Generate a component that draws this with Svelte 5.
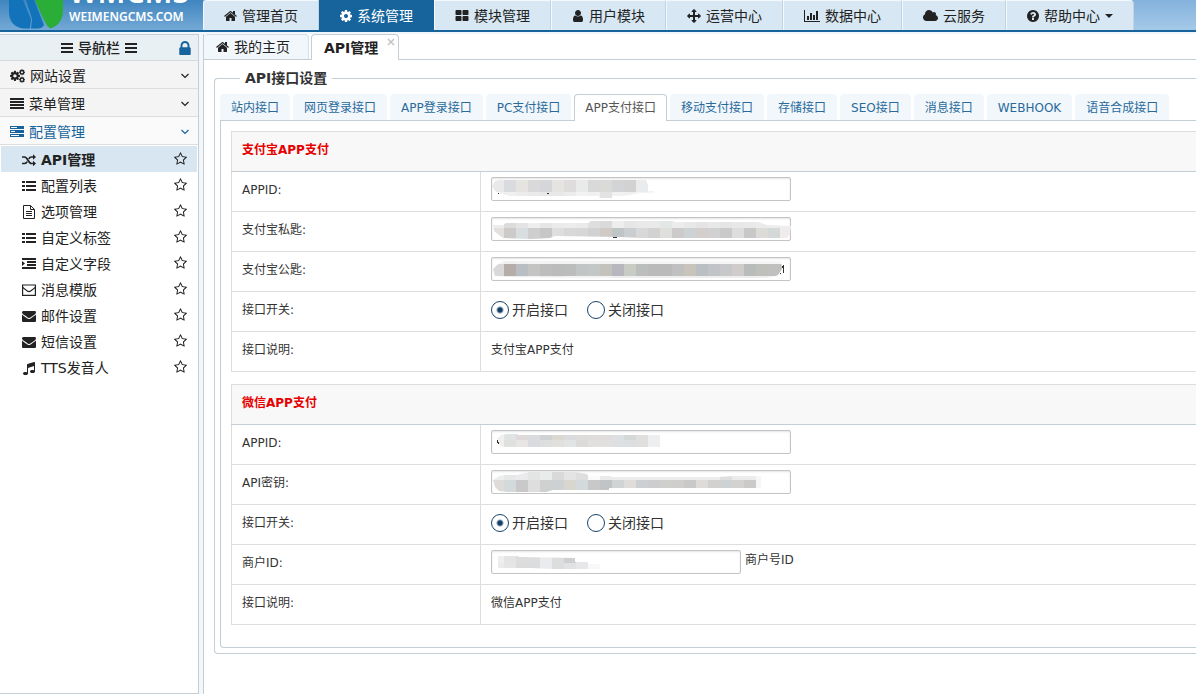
<script lang="ts">
	type Part = { d: string; line?: number; t?: string };
	type Icon = { w: number; box: string; parts: Part[] };

	const cog =
		'M1152 896q0-106-75-181t-181-75-181 75-75 181 75 181 181 75 181-75 75-181zm512-109v222q0 12-8 23t-20 13l-185 28q-19 54-39 91 35 50 107 138 10 12 10 25t-9 23q-27 37-99 108t-94 71q-12 0-26-9l-138-108q-44 23-91 38-16 136-29 186-7 28-36 28h-222q-14 0-24.5-8.5t-11.5-21.5l-28-184q-49-16-90-37l-141 107q-10 9-25 9-14 0-25-11-126-114-165-168-7-10-7-23 0-12 8-23 15-21 51-66.5t54-70.5q-27-50-41-99l-183-27q-13-2-21-12.5t-8-23.5v-222q0-12 8-23t19-13l186-28q14-46 39-92-40-57-107-138-10-12-10-24 0-10 9-23 26-36 98.5-107.5t94.5-71.5q13 0 26 10l138 107q44-23 91-38 16-136 29-186 7-28 36-28h222q14 0 24.5 8.5t11.5 21.5l28 184q49 16 90 37l142-107q9-9 24-9 13 0 25 10 129 119 165 170 7 8 7 22 0 12-8 23-15 21-51 66.5t-54 70.5q26 50 41 98l183 28q13 2 21 12.5t8 23.5z';

	const icons: Record<string, Icon> = {
		home: {
			w: 13,
			box: '64 0 1664 1792',
			parts: [
				{
					d: 'M1472 992v480q0 26-19 45t-45 19h-384v-384h-256v384h-384q-26 0-45-19t-19-45v-480q0-1 .5-3t.5-3l575-474 575 474q1 2 1 6zm223-69l-62 74q-8 9-21 11h-3q-13 0-21-7l-692-577-692 577q-12 8-24 7-13-2-21-11l-62-74q-8-10-7-23.5t11-21.5l719-599q32-26 76-26t76 26l244 204v-195q0-14 9-23t23-9h192q14 0 23 9t9 23v408l219 182q10 8 11 21.5t-7 23.5z'
				}
			]
		},
		cog: { w: 12, box: '128 0 1536 1792', parts: [{ d: cog }] },
		cogs: {
			w: 15,
			box: '0 0 15 14',
			parts: [
				{ d: cog, t: 'translate(-1 1) scale(.0066)' },
				{ d: cog, t: 'translate(8.500 -.3) scale(.0039)' },
				{ d: cog, t: 'translate(8.500 7.2) scale(.0039)' }
			]
		},
		blocks: {
			w: 14,
			box: '0 0 1792 1792',
			parts: [
				{
					d: 'M832 1024v384q0 52-38 90t-90 38h-512q-52 0-90-38t-38-90v-384q0-52 38-90t90-38h512q52 0 90 38t38 90zm0-768v384q0 52-38 90t-90 38h-512q-52 0-90-38t-38-90v-384q0-52 38-90t90-38h512q52 0 90 38t38 90zm896 768v384q0 52-38 90t-90 38h-512q-52 0-90-38t-38-90v-384q0-52 38-90t90-38h512q52 0 90 38t38 90zm0-768v384q0 52-38 90t-90 38h-512q-52 0-90-38t-38-90v-384q0-52 38-90t90-38h512q52 0 90 38t38 90z'
				}
			]
		},
		user: {
			w: 12,
			box: '128 0 1536 1792',
			parts: [
				{
					d: 'M1536 1399q0 109-62.5 187t-150.5 78h-854q-88 0-150.5-78t-62.5-187q0-85 8.5-160.5t31.5-152 58.5-131 94-89 134.5-34.5q131 128 313 128t313-128q76 0 134.5 34.5t94 89 58.5 131 31.5 152 8.5 160.5zm-256-887q0 159-112.5 271.5t-271.5 112.5-271.5-112.5-112.5-271.5 112.5-271.5 271.5-112.5 271.5 112.5 112.5 271.5z'
				}
			]
		},
		arrows: {
			w: 14,
			box: '0 0 1792 1792',
			parts: [
				{
					d: 'M1792 896q0 26-19 45l-256 256q-19 19-45 19t-45-19-19-45v-128h-384v384h128q26 0 45 19t19 45-19 45l-256 256q-19 19-45 19t-45-19l-256-256q-19-19-19-45t19-45 45-19h128v-384h-384v128q0 26-19 45t-45 19-45-19l-256-256q-19-19-19-45t19-45l256-256q19-19 45-19t45 19 19 45v128h384v-384h-128q-26 0-45-19t-19-45 19-45l256-256q19-19 45-19t45 19l256 256q19 19 19 45t-19 45-45 19h-128v384h384v-128q0-26 19-45t45-19 45 19l256 256q19 19 19 45z'
				}
			]
		},
		chart: {
			w: 16,
			box: '0 0 16 14',
			parts: [{ d: 'M0 1h1v11h15v1H0zM3 7h2v4H3zM6 4h2v7H6zM9 6h2v5H9zM12 2h2v9h-2z' }]
		},
		cloud: {
			w: 15,
			box: '64 0 1920 1792',
			parts: [
				{
					d: 'M1984 1152q0 159-112.5 271.5t-271.5 112.5h-1088q-185 0-316.5-131.5t-131.5-316.5q0-132 71-241.5t187-163.5q-2-28-2-43 0-212 150-362t362-150q158 0 286.5 88t187.5 230q70-62 166-62 106 0 181 75t75 181q0 75-41 138 129 30 213 134.5t84 239.5z'
				}
			]
		},
		help: {
			w: 12,
			box: '128 0 1536 1792',
			parts: [
				{
					d: 'M1024 1376v-192q0-14-9-23t-23-9h-192q-14 0-23 9t-9 23v192q0 14 9 23t23 9h192q14 0 23-9t9-23zm256-672q0-88-55.5-163t-138.5-116-170-41q-243 0-371 213-15 24 8 42l132 100q7 6 19 6 16 0 25-12 53-68 86-92 34-24 86-24 48 0 85.5 26t37.5 59q0 38-20 61t-68 45q-63 28-115.5 86.5t-52.5 125.5v36q0 14 9 23t23 9h192q14 0 23-9t9-23q0-19 21.5-49.5t54.5-49.5q32-18 49-28.5t46-35 44.5-48 28-60.5 12.5-81zm384 192q0 209-103 385.5t-279.5 279.5-385.5 103-385.5-103-279.5-279.5-103-385.5 103-385.5 279.5-279.5 385.5-103 385.5 103 279.5 279.5 103 385.5z'
				}
			]
		},
		caret: { w: 8, box: '0 0 8 14', parts: [{ d: 'M0 5h8L4 9z' }] },
		bars: { w: 12, box: '0 0 12 14', parts: [{ d: 'M0 2h12v2H0zM0 6h12v2H0zM0 10h12v2H0z' }] },
		lines: {
			w: 14,
			box: '0 0 14 14',
			parts: [{ d: 'M0 1h14v2H0zM0 4h14v2H0zM0 7h14v2H0zM0 10h14v2H0z' }]
		},
		server: {
			w: 14,
			box: '0 0 14 14',
			parts: [
				{ d: 'M0 1h14v3H0zm1 1v1h6V2zM0 5h14v3H0zm1 1v1h4V6zM0 9h14v3H0zm1 1v1h8v-1z' }
			]
		},
		lock: {
			w: 14,
			box: '256 128 1280 1408',
			parts: [
				{
					d: 'M640 768h512v-192q0-106-75-181t-181-75-181 75-75 181v192zm832 96v576q0 40-28 68t-68 28h-960q-40 0-68-28t-28-68v-576q0-40 28-68t68-28h32v-192q0-184 132-316t316-132 316 132 132 316v192h32q40 0 68 28t28 68z'
				}
			]
		},
		down: { w: 8, box: '0 0 8 14', parts: [{ d: 'M.5 5 4 8.5 7.5 5', line: 1.2 }] },
		random: {
			w: 14,
			box: '0 0 14 14',
			parts: [
				{ d: 'M0 4h2.5c3.5 0 3.500 6.500 7 6.500H12M0 10.500h2.500q1.700 0 2.700-1.900M6.800 5.900Q7.800 4 9.500 4H12', line: 1.7 },
				{ d: 'M11 1.200 14 4l-3 2.800zM11 7.700l3 2.800-3 2.800z' }
			]
		},
		list: {
			w: 14,
			box: '0 0 14 14',
			parts: [{ d: 'M0 2h3v2H0zM4 2h10v2H4zM0 6h3v2H0zM4 6h10v2H4zM0 10h3v2H0zM4 10h10v2H4z' }]
		},
		file: {
			w: 14,
			box: '0 0 14 14',
			parts: [
				{ d: 'M1.5.5H8.500L12.500 4.500V13.500H1.500zM8.500.5V4.500H12.500M4 6.500h6M4 8.500h6M4 10.500h6', line: 1 }
			]
		},
		indent: {
			w: 14,
			box: '0 0 14 14',
			parts: [{ d: 'M0 1h14v2H0zM5 4h9v2H5zM5 7h9v2H5zM0 10h14v2H0zM0 4l3 2.500L0 9z' }]
		},
		mailOpen: {
			w: 14,
			box: '0 0 14 14',
			parts: [{ d: 'M.6 2h12.800v10.400H.6zM.6 4q1 1.500 4.400 3.800 2 1.500 4 0Q12.400 5.500 13.400 4', line: 1.2 }]
		},
		mail: {
			w: 14,
			box: '0 0 1792 1792',
			parts: [
				{
					d: 'M1792 710v794q0 66-47 113t-113 47h-1472q-66 0-113-47t-47-113v-794q44 49 101 87 362 246 497 345 57 42 92.5 65.5t94.5 48 110 24.5h2q51 0 110-24.5t94.5-48 92.5-65.5q170-123 498-345 57-39 100-87zm0-294q0 79-49 151t-122 123q-376 261-468 325-10 7-42.5 31t-54 38.5-52 32.5-57.5 27-50 9h-2q-23 0-50-9t-57.5-27-52-32.5-54-38.5-42.5-31q-91-64-262-182.5t-205-142.5q-62-42-117-115.5t-55-136.5q0-78 41.5-130t118.5-52h1472q65 0 112.5 47t47.5 113z'
				}
			]
		},
		music: {
			w: 14,
			box: '0 0 1792 1792',
			parts: [
				{
					d: 'M1664 224v1120q0 50-34 89t-86 60.5-103.5 32-96.5 10.5-96.5-10.5-103.5-32-86-60.5-34-89 34-89 86-60.5 103.5-32 96.5-10.5q105 0 192 39v-537l-768 237v709q0 50-34 89t-86 60.5-103.5 32-96.5 10.5-96.5-10.5-103.5-32-86-60.5-34-89 34-89 86-60.5 103.5-32 96.5-10.5q105 0 192 39v-967q0-31 19-56.5t49-35.5l832-256q12-4 28-4 40 0 68 28t28 68z'
				}
			]
		},
		star: {
			w: 13,
			box: '64 64 1664 1664',
			parts: [
				{
					d: 'M1201 1004l306-297-422-62-189-382-189 382-422 62 306 297-73 421 378-199 377 199zm527-357q0 22-26 48l-363 354 86 500q1 7 1 20 0 50-41 50-19 0-40-12l-449-236-449 236q-22 12-40 12-21 0-31.5-14.5t-10.5-35.5q0-6 2-20l86-500-364-354q-25-27-25-48 0-37 56-46l502-73 225-455q19-41 49-41t49 41l225 455 502 73q56 9 56 46z'
				}
			]
		}
	};

	const topNav = [
		{ icon: 'home', label: '管理首页' },
		{ icon: 'cog', label: '系统管理' },
		{ icon: 'blocks', label: '模块管理' },
		{ icon: 'user', label: '用户模块' },
		{ icon: 'arrows', label: '运营中心' },
		{ icon: 'chart', label: '数据中心' },
		{ icon: 'cloud', label: '云服务' },
		{ icon: 'help', label: '帮助中心', more: true }
	];

	const groups = [
		{ icon: 'cogs', label: '网站设置' },
		{ icon: 'lines', label: '菜单管理' },
		{ icon: 'server', label: '配置管理' }
	];

	const menu = [
		{ icon: 'random', label: 'API管理' },
		{ icon: 'list', label: '配置列表' },
		{ icon: 'file', label: '选项管理' },
		{ icon: 'list', label: '自定义标签' },
		{ icon: 'indent', label: '自定义字段' },
		{ icon: 'mailOpen', label: '消息模版' },
		{ icon: 'mail', label: '邮件设置' },
		{ icon: 'mail', label: '短信设置' },
		{ icon: 'music', label: 'TTS发音人' }
	];

	const tabs = [
		'站内接口',
		'网页登录接口',
		'APP登录接口',
		'PC支付接口',
		'APP支付接口',
		'移动支付接口',
		'存储接口',
		'SEO接口',
		'消息接口',
		'WEBHOOK',
		'语音合成接口'
	];

	// masked values: strips of 12px cells cut to an uneven outline
	type Strip = { y: number; h: number; cells: string };
	type Mask = { clip: string; strips: Strip[]; marks?: string };

	const masks: Record<string, Mask> = {
		aliId: {
			clip: '1,9 4,4 8,3 155,3 157,8 157,14 163,14 163,16 150,16 132,19 122,19 121,21 108,21 108,19 19,19 10,17 4,14',
			strips: [
				{ y: 3, h: 12, cells: 'e9e9e9 d9dbde e5e4e0 dad9d9 d4d6da e5e4e0 dfdcdd e9ebeb d9d9d9 dadad9 d3d4d6 d2d2d3 e9ebed f4f4f4' },
				{ y: 15, h: 6, cells: 'f2f2f2 f0f0f0 ececec eceae8 e8e8ea e8e8e8 ececec f2f2f2 f0f0f0 e3e3e3 f0f2f2 f0f0f0 f4f4f4 f6f6f6' }
			],
			marks: 'M7 16h1v1H7zM56 16h2v1h-2z'
		},
		aliPrivate: {
			clip: '2,8 12,8 15,6 72,6 98,6 99,4 183,4 184,5 268,5 276,8 300,9 299,17 296,21 150,21 128,20 64,19 59,21 40,22 12,21 8,18 3,14',
			strips: [
				{ y: 4, h: 7, cells: 'ececec dcdcdc e4e4e4 eeeeee e6e6e6 ebebeb ececec eaeaea dedede dadada eeeeee e6e6e6 e9e9e9 eaeaea e3e8e7 ececec e8e8e8 e4e4e4 e8e8e8 e5e5e5 e8e8e8 e9e9e9 ebebeb ececec f0efef' },
				{ y: 11, h: 11, cells: 'e2e1df cdcaca d8dddf cecece c8c7c7 dedede d8d9d6 d7d7d8 d2d1d2 d0cac7 bfc4c6 cbced0 d8d8d8 d3d2d1 dfdfde cccaca cdd2d4 d4cfcc d1d1d2 c9c9c9 dddddc c9c8c8 dcdbd8 d5d8d9 efeceb' }
			],
			marks: 'M122 20h4v1h-4z'
		},
		aliPublic: {
			clip: '2,12 6,8 12,4 290,4 291,12 287,18 280,21 90,21 12,20 4,19',
			strips: [
				{ y: 4, h: 3, cells: 'f4f4f4 f0f0f0 f2f2f2 f4f4f4 f3f3f3 f3f3f3 f3f3f3 f4f4f4 f3f3f3 f3f3f3 f3f3f3 f6f6f6 f6f6f6 f6f6f6 f6f6f6 f6f6f6 f6f6f6 f6f6f6 f6f6f6 f6f6f6 f6f6f6 f6f6f6 f6f6f6 f6f6f6 f6f6f6' },
				{ y: 7, h: 12, cells: 'dad8d8 b4adaa b8bec1 c4c4c3 bdbdbd bbbbbb bbbcbc c1c5c6 c3c8c6 c3c2bd b9b7be c9cbc5 bcbdbd bababa bababa c0c0c0 c8c3bb b9bfc3 c2c3c6 c6c8c9 d0cccb b8bdbb bfbfbc c0c1be bcbcbe' },
				{ y: 19, h: 2, cells: 'f6f6f6 eeeeee eeeeee f3f3f3 eeeeee eeeeee f3f3f3 f3f3f3 f3f3f3 f3f3f3 eeeeee eeeeee eeeeee eeeeee eeeeee eeeeee eeeeee eeeeee eeeeee eeeeee eeeeee eeeeee eeeeee f6f6f6' }
			],
			marks: 'M289 16h1v1h-1zM292 8h1v8h-1zM291 9h1v2h-1z'
		},
		wxId: {
			clip: '6,9 10,5 16,4 26,4 27,5 169,5 169,17 13,17 8,15',
			strips: [
				{ y: 4, h: 6, cells: 'f0f0f0 e1e4e4 dddad9 d9dbde cfd1d2 dbd8d2 d9dbdd dedcdb dedddb e0dcdb dde0e3 d5d8d8 e1dfde eceeef' },
				{ y: 10, h: 7, cells: 'f2eeec dfe1e1 e8e6e5 d9dbde dddfdf e2e0dc e1e3e4 dddbda e1e0df e2dfdf dddfe0 dcdfdf e0dfde eceeef' }
			],
			marks: 'M6 10h1v2h1v2H7v-1H6z'
		},
		wxKey: {
			clip: '2,10 8,6 14,5 26,5 38,2 84,2 96,4 97,6 120,6 120,7 228,7 242,6 270,6 270,18 118,18 118,20 62,20 55,22 16,22 8,21 4,17',
			strips: [
				{ y: 2, h: 8, cells: 'eceeee e6e7e8 eaeaec e3e4e4 eaecec d9d9d9 e4e4e4 dedede fafafa eaeaea ececec ececec ececec ececec ececec ececec ececec ececec ececec dedede ececec ececec f6f6f6' },
				{ y: 10, h: 12, cells: 'dfdbd9 d4dadb c9c9c9 dedede cfd1d1 cdd1d3 d9d6d0 d4d9db c9c8c8 c2c3c4 d1d4d4 dfdcda cdd0d3 cdcdd0 cfcfce d0cecd c9c9c9 dddcdb d3d1d0 cdd2d4 d4d2d0 cccac9 f6f6f6' }
			]
		},
		wxShop: {
			clip: '7,6 27,6 28,7 84,8 84,12 97,12 97,14 109,14 109,19 97,19 62,19 40,18 7,18',
			strips: [
				{ y: 6, h: 7, cells: 'eeeeee e3e4e3 dedddd dcdddd e9ebec dcdddd d0cfcf e7e7e9 f6f6f6' },
				{ y: 13, h: 6, cells: 'eaeceb e6e6e4 dcdcdc dcdcde e9ebec dddddd e1e2e4 e7e7e9 f8f8f8' }
			]
		}
	};

	const sections = [
		{
			id: 'ali',
			title: '支付宝APP支付',
			rows: [
				{ label: 'APPID:', type: 'text', mask: 'aliId' },
				{ label: '支付宝私匙:', type: 'text', mask: 'aliPrivate' },
				{ label: '支付宝公匙:', type: 'text', mask: 'aliPublic' },
				{ label: '接口开关:', type: 'switch' },
				{ label: '接口说明:', type: 'note', note: '支付宝APP支付' }
			]
		},
		{
			id: 'wx',
			title: '微信APP支付',
			rows: [
				{ label: 'APPID:', type: 'text', mask: 'wxId' },
				{ label: 'API密钥:', type: 'text', mask: 'wxKey' },
				{ label: '接口开关:', type: 'switch' },
				{ label: '商户ID:', type: 'text', mask: 'wxShop', hint: '商户号ID' },
				{ label: '接口说明:', type: 'note', note: '微信APP支付' }
			]
		}
	];

	let activeNav = $state(1);
	let activeTab = $state(4);
	let activeMenu = $state(0);
	let enabled: Record<string, string> = $state({ ali: 'on', wx: 'on' });
</script>

{#snippet icon(name: string)}
	{@const i = icons[name]}
	<svg class="icon" width={i.w} height="14" viewBox={i.box} aria-hidden="true">
		{#each i.parts as p}
			<path
				d={p.d}
				transform={p.t}
				fill={p.line ? 'none' : 'currentColor'}
				fill-rule={p.line ? 'nonzero' : 'evenodd'}
				stroke={p.line ? 'currentColor' : 'none'}
				stroke-width={p.line ?? 0}
			/>
		{/each}
	</svg>
{/snippet}

{#snippet mosaic(name: string)}
	{@const m = masks[name]}
	<svg class="mosaic" width="300" height="24" viewBox="0 0 300 24" aria-hidden="true">
		<clipPath id="clip-{name}"><polygon points={m.clip} /></clipPath>
		<g clip-path="url(#clip-{name})" shape-rendering="crispEdges">
			{#each m.strips as s}
				{#each s.cells.split(' ') as c, n}
					<rect x={1 + n * 12} y={s.y} width="12" height={s.h} fill="#{c}" />
				{/each}
			{/each}
		</g>
		{#if m.marks}
			<path d={m.marks} fill="#333" />
		{/if}
	</svg>
{/snippet}

<div class="app">
	<header>
		<div class="logo">
			<svg width="56" height="30" viewBox="0 0 56 30" aria-hidden="true">
				<path d="M1 0H15L23 19 22 28.500H16Q1 27 1 11z" fill="#1272ba" />
				<path d="M18 0H26L36 25Q34 29 28 28.500H23L24 19z" fill="#1272ba" />
				<path d="M27 0H55V12Q54 25 42 28.500Q38 25 36 20z" fill="#2aae38" />
			</svg>
			<div class="wordmark">
				<strong>WMCMS</strong>
				<span>WEIMENGCMS.COM</span>
			</div>
		</div>
		<nav>
			{#each topNav as item, n}
				<button class:active={activeNav === n} onclick={() => (activeNav = n)}>
					{@render icon(item.icon)}
					<span>{item.label}</span>
					{#if item.more}{@render icon('caret')}{/if}
				</button>
			{/each}
		</nav>
	</header>

	<div class="body">
		<aside>
			<div class="side-title">
				{@render icon('bars')}
				<strong>导航栏</strong>
				{@render icon('bars')}
				<button class="lock" aria-label="锁定">{@render icon('lock')}</button>
			</div>
			{#each groups as g, n}
				<button class="group" class:open={n === 2}>
					{@render icon(g.icon)}
					<span>{g.label}</span>
					{@render icon('down')}
				</button>
			{/each}
			<ul>
				{#each menu as item, n}
					<li class:active={activeMenu === n}>
						<a href="#menu-{n}" onclick={() => (activeMenu = n)}>
							{@render icon(item.icon)}
							<span>{item.label}</span>
						</a>
						<button aria-label="收藏">{@render icon('star')}</button>
					</li>
				{/each}
			</ul>
		</aside>

		<main>
			<div class="pages">
				<a class="page" href="#home">{@render icon('home')}<span>我的主页</span></a>
				<a class="page current" href="#api">
					<span>API管理</span>
				</a>
				<button class="close" aria-label="关闭">
					<svg width="8" height="8" viewBox="0 0 8 8"><path d="M1 1l6 6M7 1 1 7" stroke="#c4c4c4" stroke-width="1.500" /></svg>
				</button>
			</div>

			<fieldset>
				<legend>API接口设置</legend>
				<div class="tabs">
					{#each tabs as tab, n}
						<button class:active={activeTab === n} onclick={() => (activeTab = n)}>{tab}</button>
					{/each}
				</div>
				<div class="panel">
					{#each sections as s}
						<table>
							<colgroup>
								<col class="name" />
								<col />
							</colgroup>
							<thead>
								<tr><th colspan="2">{s.title}</th></tr>
							</thead>
							<tbody>
								{#each s.rows as row, n}
									<tr>
										<td>
											{#if row.type === 'text'}
												<label for="{s.id}-{n}">{row.label}</label>
											{:else}
												{row.label}
											{/if}
										</td>
										<td>
											{#if row.type === 'text'}
												<div class="field">
													<input id="{s.id}-{n}" class:short={row.hint} type="text" />
													{@render mosaic(row.mask ?? '')}
													{#if row.hint}<span>{row.hint}</span>{/if}
												</div>
											{:else if row.type === 'switch'}
												<div class="switch">
													<label><input type="radio" name={s.id} value="on" bind:group={enabled[s.id]} />开启接口</label>
													<label><input type="radio" name={s.id} value="off" bind:group={enabled[s.id]} />关闭接口</label>
												</div>
											{:else}
												{row.note}
											{/if}
										</td>
									</tr>
								{/each}
							</tbody>
						</table>
					{/each}
				</div>
			</fieldset>
		</main>
	</div>
</div>

<style>
	:global(body) {
		margin: 0;
		background: #fff;
	}

	.app {
		display: flex;
		flex-direction: column;
		min-height: 100vh;
		overflow: hidden;
		font-family: Verdana, 'DejaVu Sans', 'Noto Sans CJK SC', sans-serif;
		font-size: 14px;
		line-height: 20px;
		color: #222;
	}

	button {
		padding: 0;
		border: 0;
		background: none;
		font: inherit;
		color: inherit;
		cursor: pointer;
	}

	a {
		color: inherit;
		text-decoration: none;
	}

	.icon {
		flex: none;
		display: block;
	}

	header {
		display: flex;
		height: 30px;
		overflow: hidden;
		border-bottom: 2px solid #17649c;
		background: linear-gradient(#84b2dc, #a5c9e8);
	}

	.logo {
		flex: none;
		display: flex;
		align-items: flex-end;
		gap: 5px;
		box-sizing: border-box;
		width: 203px;
		padding-left: 8px;
		color: #fff;
		background: linear-gradient(#3f85bf, #74a9d5);
		font-family: 'Noto Sans', sans-serif;
	}

	.wordmark {
		display: flex;
		flex-direction: column;
		padding-bottom: 5px;
	}

	.wordmark strong {
		font-size: 30px;
		font-weight: 600;
		line-height: 34px;
	}

	.wordmark span {
		font-size: 12px;
		font-weight: 600;
		line-height: 16px;
	}

	nav {
		display: flex;
	}

	nav button {
		display: flex;
		align-items: center;
		gap: 5px;
		padding: 0 20px;
		border-left: 1px solid #f2f8fc;
		border-right: 1px solid #c3d3df;
		border-top: 1px solid #f2f8fc;
		background: #d7e7f3;
		white-space: nowrap;
	}

	nav button:first-child {
		border-top-left-radius: 4px;
	}

	nav button:last-child {
		border-top-right-radius: 4px;
	}

	nav button.active {
		border-color: #17649c;
		background: #17649c;
		color: #fff;
	}

	.body {
		flex: 1;
		display: flex;
		padding-top: 2px;
		background: #f1f7fb;
	}

	aside {
		flex: none;
		box-sizing: border-box;
		width: 199px;
		border: 1px solid #c3ced5;
		border-left: 0;
		background: #fff;
	}

	.side-title {
		display: flex;
		align-items: center;
		justify-content: center;
		gap: 5px;
		height: 25px;
		border-bottom: 1px solid #d5dbdf;
		background: #e9f0f4;
		position: relative;
	}

	.side-title strong {
		font-weight: 500;
	}

	.lock {
		position: absolute;
		right: 6px;
		top: 6px;
		color: #17649c;
	}

	.group {
		display: flex;
		align-items: center;
		gap: 5px;
		width: 100%;
		height: 28px;
		padding: 2px 9px 0 10px;
		border-bottom: 1px solid #ddd;
		background: #f4f4f4;
		text-align: left;
	}

	.group span {
		flex: 1;
	}

	.group.open {
		background: #fafafa;
		color: #17649c;
	}

	ul {
		margin: 0;
		padding: 1px 1px 0;
		list-style: none;
	}

	li {
		display: flex;
		align-items: center;
		height: 26px;
		padding: 0 10px 0 21px;
	}

	li a {
		flex: 1;
		display: flex;
		align-items: center;
		gap: 5px;
		padding-top: 2px;
	}

	li.active {
		background: #d8e6f1;
		font-weight: 700;
	}

	main {
		flex: 1;
		min-width: 0;
		margin-left: 4px;
		border-left: 1px solid #c3ced5;
		background: #fff;
	}

	.pages {
		display: flex;
		height: 25px;
		border-bottom: 1px solid #c3ced5;
	}

	.page {
		display: flex;
		align-items: center;
		gap: 5px;
		padding: 0 18px 0 12px;
		border: 1px solid #d5e0e8;
		border-bottom: 0;
		border-left: 0;
		border-radius: 4px 4px 0 0;
		background: #f1f7fb;
	}

	.page.current {
		height: 25px;
		margin-left: 2px;
		padding: 0 20px 0 12px;
		border: 1px solid #c3ced5;
		border-bottom: 0;
		background: #fff;
		font-weight: 700;
	}

	.close {
		align-self: flex-start;
		margin: 4px 0 0 -12px;
		line-height: 0;
	}

	fieldset {
		min-width: 0;
		margin: 8px 0 0 10px;
		padding: 6px 0 5px 5px;
		border: 1px solid #c3ced5;
		border-right: 0;
		border-radius: 4px 0 0 4px;
	}

	legend {
		margin-left: 20px;
		padding: 0 5px;
		font-weight: 700;
		color: #333;
	}

	.tabs {
		display: flex;
		gap: 3px;
		font-size: 12px;
		border-bottom: 1px solid #c3ced5;
	}

	.tabs button {
		height: 26px;
		padding: 1px 10px 0;
		border: 1px solid #f1f7fb;
		border-bottom: 0;
		border-radius: 4px 4px 0 0;
		background: #f1f7fb;
		color: #2a6a9b;
		white-space: nowrap;
	}

	.tabs button.active {
		height: 27px;
		margin-bottom: -1px;
		padding: 0 10px;
		border-color: #c3ced5;
		background: #fff;
		color: #555;
	}

	.panel {
		display: flex;
		flex-direction: column;
		gap: 12px;
		padding: 10px 0 22px 10px;
		border: 1px solid #c3ced5;
		border-top: 0;
		border-right: 0;
		border-radius: 0 0 0 4px;
	}

	table {
		width: 100%;
		border-collapse: collapse;
		table-layout: fixed;
		font-size: 12px;
		color: #333;
	}

	th,
	td {
		box-sizing: border-box;
		height: 40px;
		padding: 0 10px 4px;
		border: 1px solid #ddd;
		border-right: 0;
		text-align: left;
	}

	th {
		border-bottom-color: #c3ced5;
		background: #f8f8f8;
		color: #e60000;
		font-weight: 700;
	}

	.name {
		width: 249px;
	}

	.field {
		display: flex;
		align-items: flex-start;
		gap: 4px;
		padding-bottom: 2px;
		position: relative;
	}

	input[type='text'] {
		box-sizing: border-box;
		width: 300px;
		height: 24px;
		padding: 2px 6px;
		border: 1px solid #c4c4c4;
		border-radius: 2px;
		box-shadow: inset 0 1px 2px #e4e4e4;
		font: inherit;
	}

	input[type='text'].short {
		width: 250px;
	}

	.mosaic {
		position: absolute;
		left: 0;
		top: 0;
		pointer-events: none;
	}

	.switch {
		display: flex;
		gap: 19px;
		font-size: 14px;
	}

	.switch label {
		display: flex;
		align-items: center;
		gap: 3px;
	}

	input[type='radio'] {
		appearance: none;
		box-sizing: border-box;
		width: 18px;
		height: 18px;
		margin: 0;
		border: 1px solid #174469;
		border-radius: 50%;
	}

	input[type='radio']:checked {
		background: radial-gradient(circle, #123f66 2px, #fff 4px);
	}
</style>
